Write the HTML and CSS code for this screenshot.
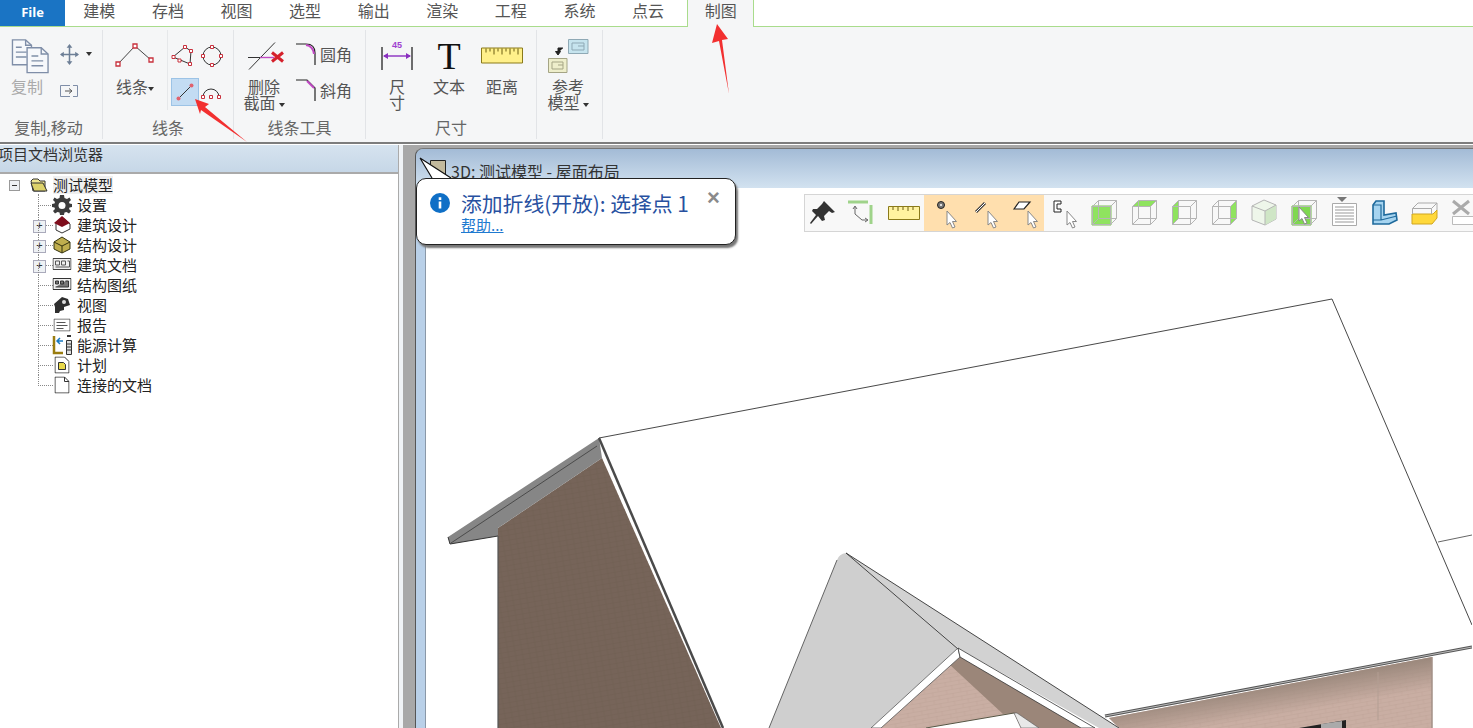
FILE: index.html
```html
<!DOCTYPE html>
<html lang="zh-CN">
<head>
  <meta charset="UTF-8" />
  <title>制图 - 测试模型</title>
  <link rel="stylesheet" href="styles.css">
</head>
<body>
  <svg class="defs" width="0" height="0">
    <symbol id="cursor" viewBox="0 0 12 18"><path d="M1 0V14L4 11.5 6.5 17 9 16 6.5 10.5H10.5Z" fill="#fff" stroke="#888"/></symbol>
    <symbol id="wire" viewBox="0 0 40 38"><path d="M8.500 12.500H26.500V30.500H8.500ZM14.500 6.500H32.500V24.500H14.500ZM8.500 12.500L14.500 6.500M26.500 12.500L32.500 6.500M26.500 30.500L32.500 24.500M8.500 30.500L14.500 24.500" fill="none" stroke="#b5b5b5"/></symbol>
  </svg>

  <nav class="tabs">
    <a class="tab-file">File</a>
    <a class="tab">建模</a>
    <a class="tab">存档</a>
    <a class="tab">视图</a>
    <a class="tab">选型</a>
    <a class="tab">输出</a>
    <a class="tab">渲染</a>
    <a class="tab">工程</a>
    <a class="tab">系统</a>
    <a class="tab">点云</a>
    <a class="tab tab-active">制图</a>
  </nav>

  <section class="ribbon">
    <div class="group group-copy">
      <div class="group-body">
        <div class="tool tool-disabled tool-copy">
          <svg class="tool-icon icon-copy" width="39" height="36" viewBox="0 0 40 36"><path d="M1.500 1.500H15L21 7V27H1.500Z" fill="#f6f8fb" stroke="#7f8ea8" stroke-width="1.400"/><path d="M15 1.500V7H21M5 9H11M5 14H16M5 19H16" fill="none" stroke="#7f8ea8" stroke-width="1.400"/><path d="M16.500 9.500H31L38 16V35H16.500Z" fill="#f6f8fb" stroke="#7f8ea8" stroke-width="1.400"/><path d="M31 9.500V16H38M21 18H28M21 23H33M21 28H33" fill="none" stroke="#7f8ea8" stroke-width="1.400"/></svg>
          <span>复制</span>
        </div>
        <div class="small-col small-col-copy">
          <div class="small-row">
            <svg width="19" height="21" viewBox="0 0 20 22"><path d="M10 2V20M1 11H19" stroke="#6d7f96" stroke-width="1.600"/><path d="M10 0L13 4H7ZM10 22L7 18H13ZM0 11L4 8V14ZM20 11L16 14V8Z" fill="#6d7f96"/></svg>
            <i class="caret"></i>
          </div>
          <div class="small-row">
            <svg width="18" height="14" viewBox="0 0 18 14"><path d="M.5 1.500H10M.5 1.500V12.500H10M13 1.500H17.500V12.500H13" fill="none" stroke="#7f8ea8"/><path d="M5 7H11M9 4.500L12 7 9 9.500" fill="none" stroke="#555"/></svg>
          </div>
        </div>
      </div>
      <div class="group-label">复制,移动</div>
    </div>

    <div class="group group-lines">
      <div class="group-body">
        <div class="tool tool-polyline">
          <svg class="tool-icon icon-low" width="40" height="25" viewBox="0 0 40 25"><path d="M3 21L20 3 36 17" fill="none" stroke="#444"/><path d="M1 19H5V23H1ZM18 1H22V5H18ZM34 15H38V19H34Z" fill="#fff" stroke="#c8313d" stroke-width="1.300"/></svg>
          <span>线条<i class="caret caret-tiny"></i></span>
        </div>
        <div class="small-grid">
          <svg width="24" height="22" viewBox="0 0 24 22"><path d="M2 12L14 2 20 6 19 19Z" fill="none" stroke="#333"/><path d="M1 10.500H4V13.500H1ZM12.500.5H15.500V3.500H12.500ZM18.500 4.500H21.500V7.500H18.500ZM17.500 17.500H20.500V20.500H17.500ZM7 14H10V17H7Z" fill="#fff" stroke="#c8313d"/></svg>
          <svg width="22" height="22" viewBox="0 0 22 22"><circle cx="11" cy="11" r="9" fill="none" stroke="#333"/><path d="M9.500.5H12.500V3.500H9.500ZM18.500 9.500H21.500V12.500H18.500ZM9.500 18.500H12.500V21.500H9.500ZM.5 9.500H3.500V12.500H.5Z" fill="#fff" stroke="#c8313d"/></svg>
          <span class="tool-on"><svg width="20" height="20" viewBox="0 0 20 20"><path d="M3 17L17 3" stroke="#333"/><circle cx="3.500" cy="16.500" r="2" fill="#e0626e"/><circle cx="16.500" cy="3.500" r="2" fill="#e0626e"/></svg></span>
          <svg class="arc-icon" width="20" height="11" viewBox="0 0 20 11"><path d="M2 9A8 8 0 0 1 18 9" fill="none" stroke="#333"/><path d="M.5 7.500H3.500V10.500H.5ZM8.500 7.500H11.500V10.500H8.500ZM16.500 7.500H19.500V10.500H16.500Z" fill="#fff" stroke="#c8313d"/></svg>
        </div>
      </div>
      <div class="group-label">线条</div>
    </div>

    <div class="group group-linetools">
      <div class="group-body">
        <div class="tool tool-trim">
          <svg class="tool-icon icon-trim" width="38" height="29" viewBox="0 0 38 29"><path d="M0 16H24" stroke="#333"/><path d="M1 28L27 1" stroke="#333"/><path d="M12 16H26" stroke="#c14bc4" stroke-width="1.400"/><path d="M24 11L35 20M35 11L24 20" stroke="#d5202b" stroke-width="3"/></svg>
          <span>删除<br>截面<i class="caret"></i></span>
        </div>
        <div class="small-col small-col-trim">
          <div class="small-row">
            <svg width="20" height="22" viewBox="0 0 20 22"><path d="M0 1H10Q19 1 19 10V22" fill="none" stroke="#222" stroke-width="1.200"/><path d="M10 2Q17 3 18 11" fill="none" stroke="#c14bc4" stroke-width="2"/></svg>
            <span>圆角</span>
          </div>
          <div class="small-row">
            <svg width="20" height="22" viewBox="0 0 20 22"><path d="M0 1H11L19 9V22" fill="none" stroke="#222" stroke-width="1.200"/><path d="M11 2L18 9" fill="none" stroke="#c14bc4" stroke-width="2"/></svg>
            <span>斜角</span>
          </div>
        </div>
      </div>
      <div class="group-label">线条工具</div>
    </div>

    <div class="group group-dims">
      <div class="group-body">
        <div class="tool tool-dim">
          <svg class="tool-icon" width="32" height="30" viewBox="0 0 32 30"><text x="16" y="7" class="dim-num">45</text><path d="M1 6V29M31 6V29" stroke="#333" stroke-width="1.400"/><path d="M3 15H29" stroke="#8a2fc0" stroke-width="1.400"/><path d="M2 15L7 12V18ZM30 15L25 12V18Z" fill="#8a2fc0"/></svg>
          <span>尺<br>寸</span>
        </div>
        <div class="tool tool-text">
          <span class="big-t">T</span>
          <span>文本</span>
        </div>
        <div class="tool tool-dist">
          <svg class="tool-icon icon-low" width="42" height="16" viewBox="0 0 42 16"><path d="M.5.5H41.500V15.500H.5Z" fill="#fff08a" stroke="#8a7a1a"/><path d="M5 1V5M9 1V4M13 1V7M17 1V4M21 1V7M25 1V4M29 1V7M33 1V4M37 1V7" stroke="#6b5d10"/></svg>
          <span>距离</span>
        </div>
      </div>
      <div class="group-label">尺寸</div>
    </div>

    <div class="group group-ref">
      <div class="group-body">
        <div class="tool tool-ref">
          <svg class="tool-icon" width="42" height="34" viewBox="0 0 42 34"><path d="M21.500.5H41V14.500H21.500Z" fill="#c6e4ee" stroke="#8fa9b5"/><path d="M25 4H37V11H25ZM31 7H37" fill="none" stroke="#8fa9b5"/><path d="M1.500 19.500H20V33.500H1.500Z" fill="#eeeecb" stroke="#a5a585"/><path d="M5 23H16V30H5ZM11 26H16" fill="none" stroke="#a5a585"/><path d="M16 9H11V14M8.500 12.500L11 16 13.500 12.500Z" fill="#222" stroke="#222"/></svg>
          <span>参考<br>模型<i class="caret"></i></span>
        </div>
      </div>
    </div>
  </section>

  <main class="workspace">
    <aside class="browser">
      <h2 class="browser-title">项目文档浏览器</h2>
      <div class="tree">
        <div class="tree-root">
          <span class="expander"></span>
          <svg width="18" height="14" viewBox="0 0 18 14"><path d="M1 3L3 1H8L10 3H15V13H3Z" fill="#f0e690" stroke="#333"/><path d="M1 5H13L17 13H4Z" fill="#ddd26a" stroke="#333"/></svg>
          <span class="tree-root-label">测试模型</span>
        </div>
        <ul class="tree-list">
          <li><svg width="20" height="20" viewBox="0 0 20 20"><path d="M8 0H12L12.500 3 15 4 17.500 2.500 19 5 17 7 17.500 8.500 20 9V12L17.500 12.500 17 14 19 16 17 18.500 14.500 17 12.500 17.500 12 20H8L7.500 17.500 5.500 17 3 18.500 1 16 3 14 2.500 12.500 0 12V9L2.500 8.500 3 7 1 5 2.500 2.500 5 4 7.500 3Z" fill="#3c3c3c"/><circle cx="10" cy="10.500" r="3.500" fill="#fff"/></svg><span>设置</span></li>
          <li class="has-kids"><svg width="18" height="18" viewBox="0 0 18 18"><path d="M9 1L17 8V13L9 17 3 14V7Z" fill="#fff" stroke="#333"/><path d="M9 0L1 7 9 11 17 7Z" fill="#7e0d1c"/></svg><span>建筑设计</span></li>
          <li class="has-kids"><svg width="18" height="18" viewBox="0 0 18 18"><path d="M9 1L17 6V13L9 17 1 13V6Z" fill="#bfae4e" stroke="#33320f"/><path d="M1 6L9 10 17 6M9 10V17" fill="none" stroke="#33320f"/></svg><span>结构设计</span></li>
          <li class="has-kids"><svg width="19" height="14" viewBox="0 0 19 14"><path d="M.5.5H18.500V11.500H.5Z" fill="#f0f0f0" stroke="#444"/><path d="M3 3H7V7H3ZM9 3H13V7H9ZM15 3H17V9H3" fill="none" stroke="#555"/></svg><span>建筑文档</span></li>
          <li><svg width="19" height="14" viewBox="0 0 19 14"><path d="M.5.5H18.500V11.500H.5Z" fill="#f0f0f0" stroke="#333"/><path d="M3 3H6V6H3ZM8 3H11V6H8ZM13 3H16V9H3" fill="#777" stroke="#333"/></svg><span>结构图纸</span></li>
          <li><svg width="18" height="18" viewBox="0 0 18 18"><path d="M1 8L9 1 15 3 17 9 11 11V14L7 15 6 17H2V11Z" fill="#2e2e2e"/><circle cx="11" cy="6" r="2" fill="#ddd"/></svg><span>视图</span></li>
          <li><svg width="17" height="13" viewBox="0 0 17 13"><path d="M.5.5H16.500V12.500H.5Z" fill="#fff" stroke="#555"/><path d="M3 4H12M3 7H14M3 10H10" stroke="#555"/></svg><span>报告</span></li>
          <li><svg width="20" height="20" viewBox="0 0 20 20"><path d="M2 1V18H11" fill="none" stroke="#9a7d10" stroke-width="2.500"/><path d="M5 6H11M8 3L5 6 8 9" fill="none" stroke="#1a7ac0" stroke-width="1.500"/><path d="M14.500 5.500H19.500V19.500H14.500ZM15 9H19M15 12H19M15 15H19" fill="#ddd" stroke="#333"/><path d="M15 1H19" stroke="#333" stroke-width="2"/></svg><span>能源计算</span></li>
          <li><svg width="15" height="17" viewBox="0 0 15 17"><path d="M.5.5H10L14.500 5V16.500H.5Z" fill="#fff" stroke="#333"/><path d="M4 6H9L11 8V13H4Z" fill="#e8d84a" stroke="#333"/></svg><span>计划</span></li>
          <li><svg width="15" height="17" viewBox="0 0 15 17"><path d="M.5.5H10L14.500 5V16.500H.5Z" fill="#fff" stroke="#333"/><path d="M10 .5V5H14.500" fill="none" stroke="#333"/></svg><span>连接的文档</span></li>
        </ul>
      </div>
    </aside>

    <div class="gutter"></div>

    <section class="doc">
      <header class="doc-title">
        <svg width="16" height="16" viewBox="0 0 16 16"><path d="M.5.5H15.500V15.500H.5Z" fill="#c2b99c" stroke="#222"/></svg>
        <span>3D: 测试模型 - 屋面布局</span>
      </header>
      <div class="doc-body">
        <div class="doc-strip"></div>
        <div class="viewport">
          <svg class="model" width="1046" height="540" viewBox="427 188 1046 540">
            <defs>
              <pattern id="brick" width="14" height="8" patternUnits="userSpaceOnUse" patternTransform="rotate(-10)">
                <path d="M0 .5H14M0 4.500H14M7 0V4M1 4V8" stroke="#bfa599" stroke-width=".5"/>
              </pattern>
              <pattern id="brick-dark" width="7" height="5" patternUnits="userSpaceOnUse" patternTransform="rotate(-10)">
                <path d="M0 .5H7M3 0V5" stroke="#6e5d52" stroke-width=".4"/>
              </pattern>
              <linearGradient id="wall-shade" gradientUnits="userSpaceOnUse" x1="1270" y1="686" x2="1275" y2="716">
                <stop offset="0" stop-color="#9d8a7e"/>
                <stop offset="1" stop-color="#9d8a7e" stop-opacity="0"/>
              </linearGradient>
            </defs>
            <!-- main roof outline -->
            <path d="M600 438L1333 299 1473 625" fill="none" stroke="#333" stroke-width=".9"/>
            <path d="M1439 542L1473 535" fill="none" stroke="#555" stroke-width=".9"/>
            <!-- left gable -->
            <path d="M499 528L603 458 722 728H499Z" fill="#766459"/>
            <path d="M499 528L603 458 722 728H499Z" fill="url(#brick-dark)"/>
            <path d="M600 438L449 537 451 544 499 536V528L603 458Z" fill="#868686"/>
            <path d="M598 446L452 543" fill="none" stroke="#444" stroke-width=".9"/>
            <path d="M449 537L451 544 499 536" fill="none" stroke="#333"/>
            <path d="M499 536V728" stroke="#555" stroke-width="1.200"/>
            <path d="M600 438L724 728" stroke="#4a4a4a" stroke-width="2.500"/>
            <!-- right wall -->
            <path d="M1110 718L1433 657V728H1120Z" fill="#c9aea3"/>
            <path d="M1110 718L1433 657V728H1120Z" fill="url(#brick)"/>
            <path d="M1110 718L1433 657V728H1120Z" fill="url(#wall-shade)"/>
            <path d="M1433 657V728" stroke="#a39087" stroke-width="1.500"/>
            <path d="M1379 672V720" stroke="#b39e93" stroke-width="1"/>
            <path d="M1106 716L1473 647" stroke="#555" stroke-width="3"/>
            <path d="M1106 716L1473 647" stroke="#bbb" stroke-width="1"/>
            <path d="M1300 728L1347 720V728Z" fill="#222"/>
            <path d="M1322 724L1343 721V728H1322Z" fill="#aaa"/>
            <!-- front gable wall -->
            <path d="M961 656L878 728H927L1015 713 1022 728H1092Z" fill="#c9aea3"/>
            <path d="M961 656L878 728H927L1015 713 1022 728H1092Z" fill="url(#brick)"/>
            <path d="M961 656L1092 728H1022L1015 713 1004 714 950 664Z" fill="#9b8679"/>
            <path d="M927 728L1015 713" stroke="#554" stroke-width="1"/>
            <path d="M1015 713L1022 728H1040L1018 713Z" fill="#e8e8e8" stroke="#555" stroke-width=".6"/>
            <!-- front gable roof -->
            <path d="M847 553Q840 554 838 560L770 728H872L959 648Z" fill="#cfcfcf"/>
            <path d="M847 553L1120 728H1100L959 648Z" fill="#d2d2d2"/>
            <path d="M838 560L770 728" stroke="#555" stroke-width=".9"/>
            <path d="M847 553L959 649" stroke="#333" stroke-width=".9"/>
            <path d="M847 553L1120 728" stroke="#333" stroke-width=".9"/>
            <path d="M959 648L872 728H882L961 657Z" fill="#fff" stroke="#555" stroke-width=".8"/>
            <path d="M959 648L1096 728H1082L961 657Z" fill="#fff" stroke="#333" stroke-width=".8"/>
          </svg>
          <div class="viewbar">
            <span class="vb"><svg width="40" height="38" viewBox="0 0 40 38"><path d="M20 7L31 18 28 19 25 17 20 22 21 26 18 27 14 22 7 30 6 29 12 21 8 17 9 15 13 15 18 10Z" fill="#333"/></svg></span>
            <span class="vb"><svg width="40" height="38" viewBox="0 0 40 38"><path d="M4 8H24M27 11V30" stroke="#9fd38a" stroke-width="3"/><path d="M11 13V20L18 26H23M9 15L11 12 13 15M21 24L24 26 21 28" fill="none" stroke="#666"/></svg></span>
            <span class="vb"><svg width="40" height="38" viewBox="0 0 40 38"><path d="M4.500 12.500H35.500V25.500H4.500Z" fill="#fff3a0" stroke="#8a7a1a"/><path d="M9 13V16M14 13V17M19 13V16M24 13V17M29 13V16" stroke="#6b5d10"/></svg></span>
            <span class="vb vb-on"><svg width="40" height="38" viewBox="0 0 40 38"><circle cx="17" cy="11" r="3.500" fill="#777" stroke="#222"/><circle cx="17" cy="11" r="1" fill="#fff"/><use href="#cursor" x="22" y="17" width="12" height="18"/></svg></span>
            <span class="vb vb-on"><svg width="40" height="38" viewBox="0 0 40 38"><path d="M12 18L21 9" stroke="#444" stroke-width="3"/><path d="M12 18L21 9" stroke="#fff" stroke-width="1"/><use href="#cursor" x="23" y="17" width="12" height="18"/></svg></span>
            <span class="vb vb-on"><svg width="40" height="38" viewBox="0 0 40 38"><path d="M10 15L15 8H26L20 15Z" fill="#fff" stroke="#222" stroke-width="1.200"/><use href="#cursor" x="23" y="17" width="12" height="18"/></svg></span>
            <span class="vb"><svg width="40" height="38" viewBox="0 0 40 38"><path d="M17 7H10V18H17V15H13V10H17Z" fill="#fff" stroke="#222"/><use href="#cursor" x="22" y="17" width="12" height="18"/></svg></span>
            <span class="vb"><svg width="40" height="38" viewBox="0 0 40 38"><path d="M8 12H27V31H8Z" fill="#8fe35f" stroke="#7cc454"/><use href="#wire"/></svg></span>
            <span class="vb"><svg width="40" height="38" viewBox="0 0 40 38"><path d="M8.500 12.500L14.500 6.500H32.500L26.500 12.500Z" fill="#8fe35f"/><use href="#wire"/></svg></span>
            <span class="vb"><svg width="40" height="38" viewBox="0 0 40 38"><path d="M8.500 12.500L14.500 6.500V24.500L8.500 30.500Z" fill="#8fe35f"/><use href="#wire"/></svg></span>
            <span class="vb"><svg width="40" height="38" viewBox="0 0 40 38"><path d="M26.500 12.500L32.500 6.500V24.500L26.500 30.500Z" fill="#8fe35f"/><use href="#wire"/></svg></span>
            <span class="vb"><svg width="40" height="38" viewBox="0 0 40 38"><path d="M8 12L20 6 32 11V25L21 31 8 26Z" fill="#eef6ea" stroke="#b5b5b5"/><path d="M21 17L32 11V25L21 31Z" fill="#cfe6c6"/><path d="M8 12L21 17 32 11M21 17V31" fill="none" stroke="#b5b5b5"/></svg></span>
            <span class="vb"><svg width="40" height="38" viewBox="0 0 40 38"><path d="M8 12H27V31H8Z" fill="#7fd850" stroke="#6fb848"/><use href="#wire"/><use href="#cursor" x="14" y="13" width="12" height="18"/></svg></span>
            <span class="vb"><svg width="40" height="38" viewBox="0 0 40 38"><path d="M8.500 9.500H32.500V31.500H8.500Z" fill="#fff" stroke="#aaa"/><path d="M11 13H30M11 16H30M11 19H30M11 22H30M11 25H30M11 28H30" stroke="#999"/><path d="M13 3H23L18 8Z" fill="#777"/></svg></span>
            <span class="vb"><svg width="40" height="38" viewBox="0 0 40 38"><path d="M9 11L12 7H20V21L32 19 33 26 25 30H9Z" fill="#a6d4f0" stroke="#1f6a9c" stroke-width="1.600"/><path d="M9 11H17V26H9M17 26L33 22" fill="none" stroke="#1f6a9c" stroke-width="1.200"/></svg></span>
            <span class="vb"><svg width="40" height="38" viewBox="0 0 40 38"><path d="M8 20H29L33 16V24L28 30H8Z" fill="#ffd83a" stroke="#cfa520"/><path d="M8.500 14.500L14 9H33V16M8.500 14.500H27.500L33 9M8.500 14.500V20M27.500 14.500V20" fill="none" stroke="#aaa"/></svg></span>
            <span class="vb"><svg width="40" height="38" viewBox="0 0 40 38"><path d="M9 7L25 20M25 7L9 20" stroke="#aaa" stroke-width="3"/><path d="M8.500 22.500H34V30.500H8.500Z" fill="#fff" stroke="#bbb"/></svg></span>
          </div>
        </div>
      </div>

      <div class="callout">
        <svg class="callout-tail" width="36" height="23" viewBox="0 0 36 23"><path d="M3 1L15 21H34Z" fill="#fff"/><path d="M3 1L15 21M3 1L34 21" stroke="#111" stroke-width="1.200"/></svg>
        <svg class="info" width="20" height="20" viewBox="0 0 20 20"><circle cx="10" cy="10" r="10" fill="#0f6fc6"/><path d="M8.700 8.500H11.300V15.500H8.700Z M8.700 4.300H11.300V6.900H8.700Z" fill="#fff"/></svg>
        <div class="callout-text">
          <div class="callout-msg">添加折线(开放): 选择点 1</div>
          <a class="callout-help">帮助...</a>
        </div>
        <span class="callout-close">×</span>
      </div>
    </section>
  </main>

  <svg class="arrows" width="1473" height="728" viewBox="0 0 1473 728">
    <path d="M195 99L209 104 205 107 247 142 201 110 200 114Z" fill="#f23030"/>
    <path d="M717 24L728 39 722 40 729 94 719 41 712 43Z" fill="#f23030"/>
  </svg>
</body>
</html>
```

FILE: styles.css
```css
* {
  box-sizing: border-box;
}

body {
  margin: 0;
  width: 1473px;
  height: 728px;
  overflow: hidden;
  position: relative;
  background: #fff;
  font-family: "Noto Sans CJK SC", "Noto Sans", sans-serif;
  color: #555;
}

.defs {
  position: absolute;
}

/* tabs */
.tabs {
  display: flex;
  height: 27px;
  border-bottom: 1px solid #a9dc8c;
  background: #fff;
}

.tab-file {
  width: 65px;
  background: #1a74c4;
  color: #fff;
  font: bold 13px/25px "Open Sans", sans-serif;
  text-align: center;
}

.tab {
  width: 68.6px;
  font-size: 16px;
  line-height: 20px;
  text-align: center;
  color: #555;
}

.tab-active {
  width: 67px;
  height: 27px;
  margin-left: 5px;
  background: #f5f6f7;
  border: 1px solid #a9dc8c;
  border-width: 0 1px;
}

/* ribbon */
.ribbon {
  display: flex;
  height: 117px;
  background: #f5f6f7;
  border-bottom: 2px solid #7d7d7d;
}

.group {
  display: flex;
  flex-direction: column;
  margin: 3px 0 3px;
  border-right: 1px solid #e2e4e7;
}

.group-copy { width: 103px; }
.group-lines { width: 131px; }
.group-linetools { width: 132px; }
.group-dims { width: 171px; }
.group-ref { width: 66px; }

.group-body {
  display: flex;
  height: 87px;
}

.group-label {
  font-size: 16px;
  line-height: 20px;
  text-align: center;
  color: #666;
}

.group-copy .group-label {
  padding-right: 5px;
}

.tool {
  display: flex;
  flex-direction: column;
  align-items: center;
  padding-top: 8px;
  font-size: 16px;
  line-height: 16px;
  text-align: center;
  white-space: nowrap;
}

.tool > span {
  margin-top: -1px;
  margin-bottom: 1px;
}

.tool-icon {
  display: block;
  height: 41px;
  padding-bottom: 5px;
}

.icon-low {
  margin-top: 5px;
  height: 36px;
  padding-bottom: 11px;
}

.icon-copy {
  margin-left: 6px;
}

.icon-trim {
  margin-left: 5px;
}

.tool-disabled {
  color: #aaa;
}

.tool-copy {
  width: 36px;
  margin-left: 9px;
}

.tool-polyline {
  width: 40px;
  margin-left: 12px;
}

.tool-trim {
  width: 42px;
  margin-left: 9px;
}

.tool-dim {
  width: 32px;
  margin-left: 15px;
}

.tool-text {
  width: 36px;
  margin-left: 18px;
}

.tool-dist {
  width: 44px;
  margin-left: 13px;
}

.tool-ref {
  width: 50px;
  margin-left: 6px;
}

.big-t {
  height: 41px;
  font: 38px/36px "Liberation Serif", serif;
  color: #111;
}

.tool > .big-t {
  margin: 0;
}

.dim-num {
  font: bold 9px "Liberation Sans", sans-serif;
  fill: #a040d0;
  text-anchor: middle;
}

.small-col {
  display: flex;
  flex-direction: column;
  padding-top: 13px;
}

.small-col-copy {
  margin-left: 15px;
  gap: 15px;
}

.small-col-trim {
  margin-left: 11px;
  gap: 14px;
  padding-top: 13px;
}

.small-row {
  display: flex;
  align-items: center;
  gap: 4px;
  height: 22px;
  font-size: 16px;
}

.small-grid {
  display: grid;
  grid-template-columns: 30px 24px;
  grid-auto-rows: 36px;
  align-items: center;
  margin-left: 12px;
  padding-top: 8px;
  border-left: 1px solid #e6e8ea;
  padding-left: 3px;
  height: 80px;
}

.tool-on {
  display: flex;
  align-items: center;
  justify-content: center;
  width: 28px;
  height: 28px;
  background: #c3dcf3;
  border: 1px solid #9cc3e6;
}

.arc-icon {
  margin-top: 2px;
}

.caret {
  display: inline-block;
  margin-left: 3px;
  border: 3.5px solid transparent;
  border-top: 4px solid #333;
  border-bottom: 0;
  vertical-align: middle;
}

.caret-tiny {
  margin-left: 0;
}

/* workspace */
.workspace {
  display: flex;
  height: 584px;
  padding-top: 1px;
  background: #a8a8a8;
  background-clip: content-box;
}

.browser {
  width: 399px;
  display: flex;
  flex-direction: column;
  background: #fff;
  border-right: 1px solid #aaa;
}

.browser-title {
  margin: 0;
  height: 29px;
  text-indent: -2px;
  font-size: 15px;
  font-weight: 400;
  line-height: 18px;
  color: #333;
  background: linear-gradient(#d6e3ef, #c6d7e7);
  border-bottom: 2px solid #aaa;
  overflow: hidden;
  white-space: nowrap;
}

.tree {
  flex: 1;
  padding-top: 1px;
  font-size: 15px;
  color: #222;
}

.tree-root {
  display: flex;
  align-items: center;
  height: 20px;
  padding-left: 9px;
  line-height: 20px;
}

.expander {
  position: relative;
  width: 11px;
  height: 11px;
  margin-right: 10px;
  background: #eef1f4;
  border: 1px solid #999;
}

.expander::before {
  content: "";
  position: absolute;
  left: 2px;
  top: 4px;
  width: 5px;
  height: 1px;
  background: #333;
}

.tree-root-label {
  margin-left: 5px;
  background: #f0f0f0;
  line-height: 18px;
}

.tree-list {
  list-style: none;
  margin: 0 0 0 38px;
  padding: 0;
}

.tree-list li {
  position: relative;
  display: flex;
  align-items: center;
  height: 20px;
  padding-left: 23px;
  line-height: 20px;
}

.tree-list svg {
  position: absolute;
  left: 24px;
  top: 50%;
  transform: translate(-50%, -50%);
}

.tree-list span {
  margin-left: 16px;
}

.tree-list li::before {
  content: "";
  position: absolute;
  left: 0;
  top: -1px;
  bottom: 0;
  width: 14px;
  height: 11px;
  border-left: 1px dotted #888;
  border-bottom: 1px dotted #888;
}

.tree-list li:not(:last-child)::after {
  content: "";
  position: absolute;
  left: 0;
  top: 10px;
  height: 10px;
  border-left: 1px dotted #888;
}

.has-kids > span {
  position: relative;
}

.has-kids > span::before {
  content: "+";
  position: absolute;
  left: -44px;
  top: 5px;
  width: 11px;
  height: 11px;
  font: 11px/9px "Liberation Sans", sans-serif;
  text-align: center;
  color: #333;
  background: #eef1f4;
  border: 1px solid #aab;
}

.gutter {
  width: 16px;
  background: #a8a8a8;
  border-left: 4px solid #f0f3f6;
}

/* document window */
.doc {
  position: relative;
  flex: 1;
  display: flex;
  flex-direction: column;
  margin-top: 3px;
  background: #a8c0d8;
  border-left: 1px solid #555;
  border-top: 1px solid #777;
  border-top-left-radius: 8px;
}

.doc-title {
  display: flex;
  align-items: flex-start;
  gap: 5px;
  height: 39px;
  padding: 11px 0 0 14px;
  font-size: 16px;
  line-height: 22px;
  color: #333;
  background: linear-gradient(#a3bbd6, #d2e2f0);
  border-top-left-radius: 8px;
  overflow: hidden;
}

.doc-body {
  flex: 1;
  display: flex;
  min-height: 0;
}

.doc-strip {
  width: 10px;
  background: #b9d0e8;
  border-right: 1px solid #8a98a8;
}

.viewport {
  position: relative;
  flex: 1;
  background: #fff;
  overflow: hidden;
}

.model {
  display: block;
}

.viewbar {
  position: absolute;
  left: 378px;
  top: 6px;
  display: flex;
  width: 700px;
  height: 38px;
  background: #f8f8f8;
  border: 1px solid #d5d5d5;
  border-right: 0;
}

.vb {
  flex: none;
  width: 40px;
  height: 36px;
  overflow: hidden;
}

.vb:first-child {
  margin-left: -1px;
}

.vb-on {
  background: #ffdfae;
}

.vb svg {
  display: block;
  margin-top: -1px;
}

/* callout */
.callout {
  position: absolute;
  left: 0;
  top: 29px;
  display: flex;
  width: 320px;
  height: 67px;
  padding: 14px 0 0 13px;
  background: #fff;
  border: 1px solid #222;
  border-radius: 10px;
  box-shadow: 2px 3px 2px #777;
}

.callout-tail {
  position: absolute;
  left: 0;
  top: -22px;
}

.info {
  flex: none;
}

.callout-text {
  margin-left: 11px;
}

.callout-msg {
  font: 20.8px/20px "Noto Sans CJK SC", "Open Sans", sans-serif;
  color: #27509f;
  white-space: nowrap;
}

.callout-help {
  display: block;
  margin-top: 3px;
  font-size: 15px;
  line-height: 18px;
  color: #1f7ad0;
  text-decoration: underline;
}

.callout-close {
  position: absolute;
  left: 290px;
  top: 8px;
  font: bold 22px/22px "Liberation Sans", sans-serif;
  color: #8a8a8a;
}

.arrows {
  position: absolute;
  left: 0;
  top: 0;
  pointer-events: none;
}
```
